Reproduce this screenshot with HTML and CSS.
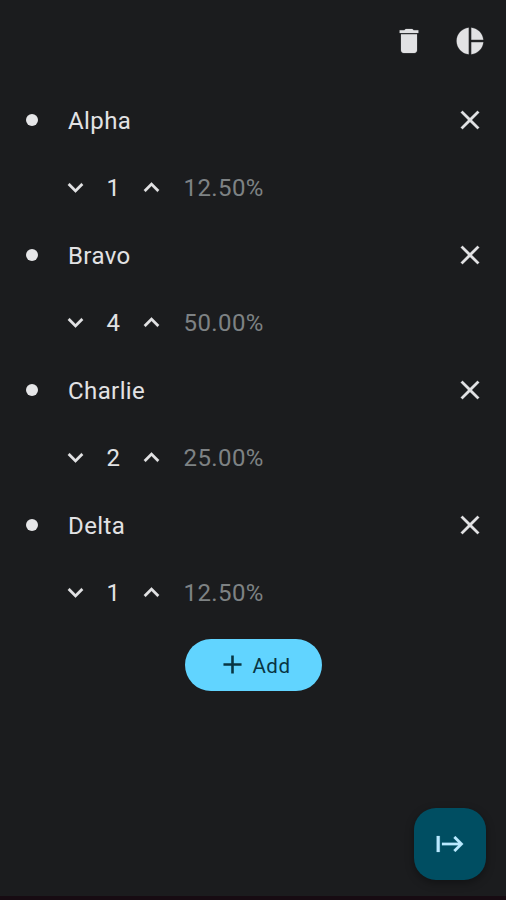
FILE: index.html
```html
<!DOCTYPE html>
<html lang="en">
<head>
<meta charset="utf-8">
<title>Options</title>
<link rel="stylesheet" href="styles.css">
</head>
<body>
<svg class="defs" aria-hidden="true">
  <symbol id="close" viewBox="0 0 24 24"><path d="M19 6.41 17.59 5 12 10.59 6.41 5 5 6.41 10.59 12 5 17.59 6.41 19 12 13.41 17.59 19 19 17.59 13.41 12z"/></symbol>
  <symbol id="down" viewBox="0 0 24 24"><path d="M16.59 8.59 12 13.17 7.41 8.59 6 10l6 6 6-6z"/></symbol>
  <symbol id="up" viewBox="0 0 24 24"><path d="m12 8-6 6 1.41 1.41L12 10.83l4.59 4.58L18 14z"/></symbol>
</svg>
<header class="bar">
  <svg class="icon" viewBox="0 0 24 24"><path d="M6 19c0 1.1.9 2 2 2h8c1.1 0 2-.9 2-2V7H6v12zM19 4h-3.500l-1-1h-5l-1 1H5v2h14V4z"/></svg>
  <svg class="icon" viewBox="0 0 24 24"><path d="M11 2.050V21.950C5.950 21.450 2 17.200 2 12S5.950 2.550 11 2.050zM13 2.050V11h8.950C21.500 6.300 17.750 2.500 13 2.050zM13 13v8.950c4.750-.450 8.500-4.200 8.950-8.950H13z"/></svg>
</header>
<main class="list">
  <section class="item">
    <div class="row"><i class="dot"></i><span class="name">Alpha</span><svg class="icon"><use href="#close"/></svg></div>
    <div class="row weight"><svg class="chevron"><use href="#down"/></svg><span class="count">1</span><svg class="chevron"><use href="#up"/></svg><span class="share">12.50%</span></div>
  </section>
  <section class="item">
    <div class="row"><i class="dot"></i><span class="name">Bravo</span><svg class="icon"><use href="#close"/></svg></div>
    <div class="row weight"><svg class="chevron"><use href="#down"/></svg><span class="count">4</span><svg class="chevron"><use href="#up"/></svg><span class="share">50.00%</span></div>
  </section>
  <section class="item">
    <div class="row"><i class="dot"></i><span class="name">Charlie</span><svg class="icon"><use href="#close"/></svg></div>
    <div class="row weight"><svg class="chevron"><use href="#down"/></svg><span class="count">2</span><svg class="chevron"><use href="#up"/></svg><span class="share">25.00%</span></div>
  </section>
  <section class="item">
    <div class="row"><i class="dot"></i><span class="name">Delta</span><svg class="icon"><use href="#close"/></svg></div>
    <div class="row weight"><svg class="chevron"><use href="#down"/></svg><span class="count">1</span><svg class="chevron"><use href="#up"/></svg><span class="share">12.50%</span></div>
  </section>
</main>
<button class="add"><svg class="plus" viewBox="0 0 24 24"><path d="M19 13h-6v6h-2v-6H5v-2h6V5h2v6h6v2z"/></svg><span>Add</span></button>
<button class="fab" aria-label="Start"><svg class="start" viewBox="0 0 24 24"><path d="M2 6h2.300v12H2zM14.590 7.410 18.170 11H6v2h12.170l-3.590 3.590L16 18l6-6-6-6z"/></svg></button>
<div class="edge"></div>
</body>
</html>
```

FILE: styles.css
```css
* { box-sizing: border-box; }
body {
  margin: 0;
  height: 900px;
  display: flex;
  flex-direction: column;
  overflow: hidden;
  background: #1b1c1e;
  color: #e2e2e4;
  font-family: Roboto, sans-serif;
  font-size: 24px;
  letter-spacing: 0.4px;
}
svg { display: block; fill: currentColor; stroke: currentColor; stroke-width: 0.15; flex: none; }
.defs { position: absolute; width: 0; height: 0; }
.icon { width: 32px; height: 32px; }
.bar {
  height: 85.75px;
  flex: none;
  display: flex;
  justify-content: flex-end;
  align-items: flex-start;
  gap: 29.5px;
  padding: 25px 20px 0 0;
}
.row { height: 67.5px; display: flex; align-items: center; padding: 0 20px 0 25.5px; }
.dot { width: 12px; height: 12px; flex: none; border-radius: 50%; background: #e6e6e8; }
.name { flex: 1; margin-left: 30.5px; padding-top: 3px; }
.weight { padding-left: 60px; }
.chevron { width: 31px; height: 31px; }
.count { width: 45px; padding-top: 1px; text-align: center; }
.share { margin-left: 16.5px; padding-top: 1px; color: #7e8284; }
.add {
  width: 137px;
  height: 52px;
  margin: 12.75px auto 0 185px;
  padding: 0;
  flex: none;
  display: flex;
  align-items: center;
  justify-content: center;
  gap: 5px;
  border: 0;
  border-radius: 26px;
  background: #61d4ff;
  color: #083543;
  font: 400 20.5px Roboto, sans-serif;
  letter-spacing: 0.5px;
}
.add span { padding-top: 2px; }
.plus { width: 31px; height: 31px; stroke: none; }
.fab {
  width: 72px;
  height: 72px;
  margin: auto 20px 16px auto;
  padding: 0 0 1px 0;
  flex: none;
  display: grid;
  place-items: center;
  border: 0;
  border-radius: 22px;
  background: #004e62;
  color: #baeaff;
  box-shadow: 0 3px 8px rgba(0, 0, 0, 0.35);
}
.start { width: 32px; height: 32px; }
.edge { height: 4px; flex: none; background: #170b12; }
```
